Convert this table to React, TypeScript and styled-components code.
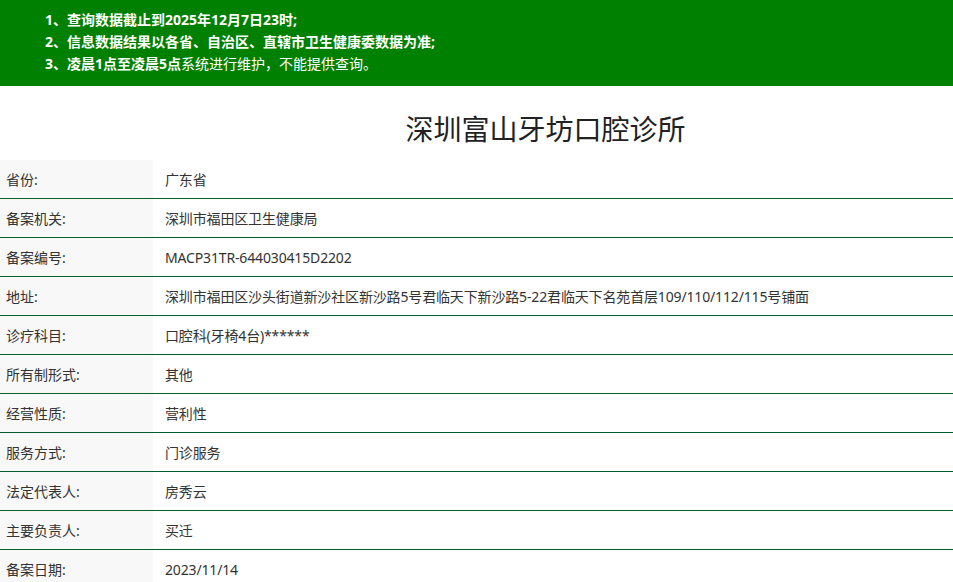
import React from "react";
import styled, { createGlobalStyle } from "styled-components";

const Global = createGlobalStyle`
  html, body { margin: 0; padding: 0; background: #fff; }
  body { font-family: "Noto Sans", "Noto Sans CJK SC", sans-serif; color: #333; }
`;

const Notice = styled.div`
  background: #008000;
  color: #fff;
  height: 86px;
  box-sizing: border-box;
  padding: 9px 0 0 45px;
`;

const NoticeLine = styled.div<{ $bold?: boolean }>`
  font-size: 14px;
  line-height: 22px;
  font-weight: ${(p) => (p.$bold ? 700 : 400)};
`;

const Strong = styled.b`
  font-weight: 700;
`;

const Title = styled.h1`
  margin: 0;
  height: 74px;
  box-sizing: border-box;
  padding: 23px 0 0 138px;
  text-align: center;
  font-size: 28px;
  line-height: 38px;
  font-weight: 400;
  color: #222;
  font-family: "Noto Sans CJK SC", sans-serif;
`;

const Table = styled.div`
  display: flex;
  flex-direction: column;
`;

const Row = styled.div`
  display: grid;
  grid-template-columns: 153px 1fr;
  height: 39px;
  box-sizing: border-box;
  border-bottom: 1px solid #005f2d;
  font-size: 14px;
  color: #333;
`;

const Label = styled.div`
  background: #f8f8f8;
  display: flex;
  align-items: center;
  padding-left: 6px;
`;

const Value = styled.div`
  display: flex;
  align-items: center;
  padding-left: 12px;
  white-space: nowrap;
  letter-spacing: -0.15px;
`;

const rows: [string, string][] = [
  ["省份:", "广东省"],
  ["备案机关:", "深圳市福田区卫生健康局"],
  ["备案编号:", "MACP31TR-644030415D2202"],
  ["地址:", "深圳市福田区沙头街道新沙社区新沙路5号君临天下新沙路5-22君临天下名苑首层109/110/112/115号铺面"],
  ["诊疗科目:", "口腔科(牙椅4台)******"],
  ["所有制形式:", "其他"],
  ["经营性质:", "营利性"],
  ["服务方式:", "门诊服务"],
  ["法定代表人:", "房秀云"],
  ["主要负责人:", "买迁"],
  ["备案日期:", "2023/11/14"],
];

export default function App() {
  return (
    <>
      <Global />
      <Notice>
        <NoticeLine $bold>1、查询数据截止到2025年12月7日23时;</NoticeLine>
        <NoticeLine $bold>2、信息数据结果以各省、自治区、直辖市卫生健康委数据为准;</NoticeLine>
        <NoticeLine>
          <Strong>3、凌晨1点至凌晨5点</Strong>系统进行维护，不能提供查询。
        </NoticeLine>
      </Notice>
      <Title>深圳富山牙坊口腔诊所</Title>
      <Table>
        {rows.map(([l, v]) => (
          <Row key={l}>
            <Label>{l}</Label>
            <Value>{v}</Value>
          </Row>
        ))}
      </Table>
    </>
  );
}
